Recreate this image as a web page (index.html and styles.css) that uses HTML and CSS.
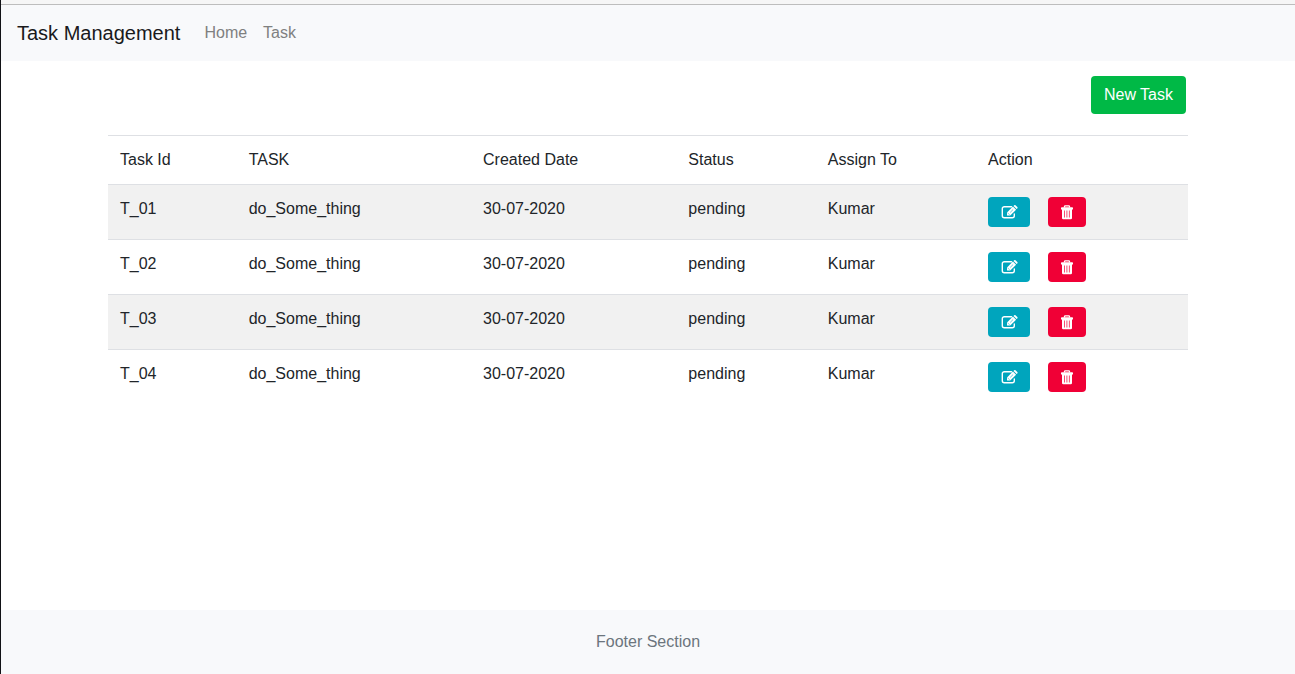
FILE: index.html
```
<!DOCTYPE html>
<html lang="en">
<head>
<meta charset="utf-8">
<title>Task Management</title>
<link rel="stylesheet" href="styles.css">
</head>
<body>
<svg class="sprite" aria-hidden="true">
  <symbol id="icon-edit" viewBox="0 0 17 14">
    <path d="M10.500 1.700H3.300a2 2 0 0 0-2 2v7a2 2 0 0 0 2 2h8a2 2 0 0 0 2-2V9" fill="none" stroke="currentColor" stroke-width="1.400" stroke-linecap="round"/>
    <path d="M6 10.600V7.400l5.900-5.900 3.200 3.200-5.900 5.900z" fill="currentColor"/>
    <path d="M12.500 1l.7-.7a1 1 0 0 1 1.300 0l1.800 1.800a1 1 0 0 1 0 1.300l-.7.700z" fill="currentColor"/>
    <path d="M7 8.200l1.500 1.500M9.200 7.400l2.900-2.900" stroke="#00a5bd" stroke-width=".6"/>
  </symbol>
  <symbol id="icon-trash" viewBox="0 0 14 15">
    <path d="M4.500 2.500V1.600a.8.800 0 0 1 .8-.8h3.400a.8.800 0 0 1 .8.800v.9" fill="none" stroke="currentColor" stroke-width="1.300"/>
    <path d="M1.800 2.200h10.400a.8.800 0 0 1 .8.800v1.400H1V3a.8.800 0 0 1 .8-.8z" fill="currentColor"/>
    <path d="M2 4h10v9a1.200 1.200 0 0 1-1.200 1.200H3.200A1.200 1.200 0 0 1 2 13z" fill="currentColor"/>
    <path d="M4.500 5.500v7M6.900 5.500v7M9.400 5.500v7" stroke="#f00036" stroke-width=".7"/>
  </symbol>
</svg>
<nav class="navbar">
  <a class="brand" href="#">Task Management</a>
  <a class="nav-link" href="#">Home</a>
  <a class="nav-link" href="#">Task</a>
</nav>
<main class="container">
  <div class="toolbar"><button class="btn btn-new" type="button">New Task</button></div>
  <table class="tasks">
    <thead>
      <tr><th>Task Id</th><th>TASK</th><th>Created Date</th><th>Status</th><th>Assign To</th><th>Action</th></tr>
    </thead>
    <tbody>
      <tr><td>T_01</td><td>do_Some_thing</td><td>30-07-2020</td><td>pending</td><td>Kumar</td><td><div class="actions"><button class="btn btn-edit" type="button" aria-label="Edit T_01"><svg class="icon-edit"><use href="#icon-edit"/></svg></button><button class="btn btn-delete" type="button" aria-label="Delete T_01"><svg class="icon-trash"><use href="#icon-trash"/></svg></button></div></td></tr>
      <tr><td>T_02</td><td>do_Some_thing</td><td>30-07-2020</td><td>pending</td><td>Kumar</td><td><div class="actions"><button class="btn btn-edit" type="button" aria-label="Edit T_02"><svg class="icon-edit"><use href="#icon-edit"/></svg></button><button class="btn btn-delete" type="button" aria-label="Delete T_02"><svg class="icon-trash"><use href="#icon-trash"/></svg></button></div></td></tr>
      <tr><td>T_03</td><td>do_Some_thing</td><td>30-07-2020</td><td>pending</td><td>Kumar</td><td><div class="actions"><button class="btn btn-edit" type="button" aria-label="Edit T_03"><svg class="icon-edit"><use href="#icon-edit"/></svg></button><button class="btn btn-delete" type="button" aria-label="Delete T_03"><svg class="icon-trash"><use href="#icon-trash"/></svg></button></div></td></tr>
      <tr><td>T_04</td><td>do_Some_thing</td><td>30-07-2020</td><td>pending</td><td>Kumar</td><td><div class="actions"><button class="btn btn-edit" type="button" aria-label="Edit T_04"><svg class="icon-edit"><use href="#icon-edit"/></svg></button><button class="btn btn-delete" type="button" aria-label="Delete T_04"><svg class="icon-trash"><use href="#icon-trash"/></svg></button></div></td></tr>
    </tbody>
  </table>
</main>
<footer class="footer">Footer Section</footer>
</body>
</html>
```
FILE: styles.css
```
* { box-sizing: border-box; }
body {
  margin: 0;
  min-height: 100vh;
  display: flex;
  flex-direction: column;
  border-left: 1px solid #111216;
  font: 16px/24px "Liberation Sans", Arial, sans-serif;
  color: #212529;
  background: #fff;
}
body::before {
  content: "";
  height: 4px;
  background: #f6f6f6;
  border-bottom: 1px solid #bdbdbd;
}
.sprite { display: none; }
.navbar {
  display: flex;
  align-items: center;
  gap: 16px;
  padding: 8px 16px;
  background: #f8f9fb;
}
.navbar a { text-decoration: none; }
.brand {
  margin-right: 8px;
  font-size: 20px;
  line-height: 30px;
  color: #1a1a1b;
}
.nav-link { padding: 8px 0; color: #7f8080; }
.container {
  flex: 1;
  width: 100%;
  max-width: 1140px;
  margin: 0 auto;
  padding: 15px 30px;
}
.toolbar {
  display: flex;
  justify-content: flex-end;
  padding-right: 2px;
  margin-bottom: 21px;
}
.btn {
  display: flex;
  align-items: center;
  justify-content: center;
  border: 0;
  border-radius: 4px;
  color: #fff;
  font: inherit;
  cursor: pointer;
}
.btn-new { padding: 7px 13px; background: #00b946; }
.btn-edit { width: 42px; height: 30px; padding: 0; background: #00a5bd; }
.btn-delete { width: 38px; height: 30px; padding: 0; background: #f00036; }
.icon-edit { width: 17px; height: 14px; }
.icon-trash { width: 14px; height: 15px; }
.actions { display: flex; gap: 18px; padding-right: 1px; }
.tasks { width: 100%; border-collapse: collapse; }
.tasks th, .tasks td {
  padding: 12px;
  border-top: 1px solid #dee0e4;
  text-align: left;
  vertical-align: top;
  font-weight: 400;
}
.tasks tbody tr:nth-child(odd) { background: #f1f1f1; }
.footer {
  padding: 20px;
  text-align: center;
  color: #6c757d;
  background: #f8f9fb;
}
```
